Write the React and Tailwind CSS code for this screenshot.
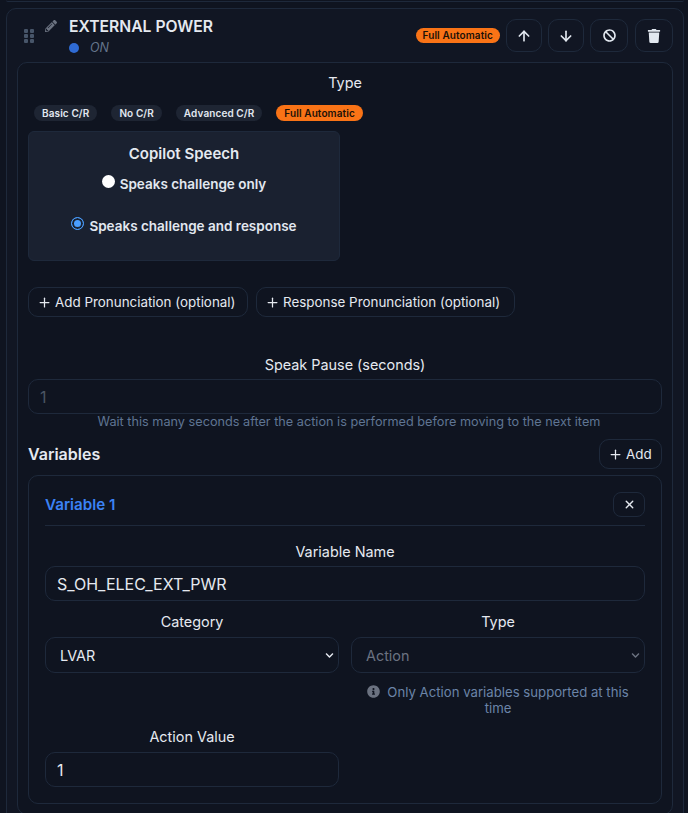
import { FaBan, FaTrash, FaInfoCircle, FaPencilAlt, FaChevronDown } from "react-icons/fa";
import { LuPlus, LuArrowUp, LuArrowDown, LuX } from "react-icons/lu";

const labelClass = "block text-center text-[14.4px] leading-[20px] font-normal text-[#e5e9f0]";
const borderClass = "border border-[#1e293b]";

function Pill({ name, active, className }) {
  return (
    <span
      className={
        "flex items-center rounded-full text-[10px] font-semibold tracking-[0.1px] " +
        (active ? "bg-[#f97316] text-[#1a1108] " : "bg-[#1e2533] text-[#e2e8f0] ") +
        (className || "h-[16px] px-[8px]")
      }
    >
      {name}
    </span>
  );
}

function IconButton({ width, children }) {
  return (
    <button className={`flex h-[33px] items-center justify-center rounded-[10px] text-[#e2e8f0] ${borderClass} ${width}`}>
      {children}
    </button>
  );
}

function OutlineButton({ name, className }) {
  return (
    <button className={`flex h-[30px] items-center gap-[3px] rounded-[10px] pl-[8px] text-[13.4px] text-[#e5e9f0] ${borderClass} ${className}`}>
      <LuPlus className="h-[15px] w-[15px]" />
      {name}
    </button>
  );
}

function Radio({ label, checked, className }) {
  return (
    <label className={`flex items-start justify-center gap-[5px] text-[13.5px] font-semibold leading-[20px] text-[#e2e8f0] ${className}`}>
      <input
        type="radio"
        name="speech"
        defaultChecked={checked}
        className="mt-[1px] h-[13px] w-[13px] appearance-none rounded-full bg-white checked:border checked:border-[#4a9eff] checked:bg-[#4a9eff] checked:shadow-[inset_0_0_0_2px_#1a2130]"
      />
      {label}
    </label>
  );
}

function Select({ value, disabled, name }) {
  return (
    <div className="relative mt-[5px]">
      <select
        disabled={disabled}
        defaultValue={value}
        name={name}
        className={`h-[36px] w-full appearance-none rounded-[10px] bg-[#0f1420] px-[14px] pt-[2px] text-[14.4px] ${borderClass} ${disabled ? "text-[#6b7280]" : "text-[#e5e9f0]"}`}
      >
        <option>{value}</option>
      </select>
      <FaChevronDown className={`absolute right-[5px] top-[14px] h-[9px] w-[9px] ${disabled ? "text-[#6b7280]" : "text-[#e5e9f0]"}`} />
    </div>
  );
}

export default function App() {
  return (
    <div className="h-[813px] overflow-hidden bg-[#0f1420] font-['Inter',sans-serif]">
      <div className="ml-[6px] mr-[4px] h-[2px] rounded-b-[10px] border-b border-[#1e293b]" />
      <div className={`ml-[6px] mr-[4px] mt-[6px] rounded-[10px] bg-[#111623] px-[10px] pb-[20px] ${borderClass}`}>
        <div className="flex h-[53px] items-start">
          <div className="ml-[7px] mt-[20px] grid w-[11px] grid-cols-2 gap-[1px]">
            {[0, 1, 2, 3, 4, 5].map((i) => (
              <span key={i} className="h-[4px] w-[4px] rounded-[1px] bg-[#475569]" />
            ))}
          </div>
          <FaPencilAlt className="ml-[10px] mt-[11px] h-[12px] w-[12px] text-[#6b7280]" />
          <div className="ml-[12px] mt-[8px]">
            <h2 className="text-[15.7px] font-semibold leading-[20px] text-[#e5e9f0]">EXTERNAL POWER</h2>
            <div className="mt-[3px] flex items-center gap-[11px] text-[12.5px] italic leading-[16px] text-[#64748b]">
              <span className="h-[10px] w-[10px] rounded-full bg-[#2f6bd4]" />
              ON
            </div>
          </div>
          <div className="ml-auto mt-[10px] flex items-center gap-[6px]">
            <Pill name="Full Automatic" active className="h-[15px] px-[7px]" />
            <IconButton width="w-[36px]"><LuArrowUp className="h-[16px] w-[16px]" strokeWidth={2.5} /></IconButton>
            <IconButton width="w-[36px]"><LuArrowDown className="h-[16px] w-[16px]" strokeWidth={2.5} /></IconButton>
            <IconButton width="w-[38px]"><FaBan className="h-[13px] w-[13px]" /></IconButton>
            <IconButton width="w-[38px] ml-[1px]"><FaTrash className="h-[14px] w-[14px]" /></IconButton>
          </div>
        </div>

        <div className={`rounded-[10px] bg-[#0f1420] px-[10px] pb-[10px] pt-[10px] ${borderClass}`}>
          <p className={labelClass}>Type</p>
          <div className="ml-[6px] mt-[12px] flex gap-[14px]">
            <Pill name="Basic C/R" />
            <Pill name="No C/R" />
            <Pill name="Advanced C/R" />
            <Pill name="Full Automatic" active />
          </div>

          <div className={`mt-[10px] h-[130px] w-[312px] rounded-[6px] bg-[#1a2130] pt-[12px] ${borderClass}`}>
            <h3 className="text-center text-[15px] font-semibold leading-[20px] text-[#e5e9f0]">Copilot Speech</h3>
            <Radio label="Speaks challenge only" className="mt-[10px]" />
            <Radio label="Speaks challenge and response" checked className="mt-[22px]" />
          </div>

          <div className="mt-[26px] flex gap-[8px]">
            <OutlineButton name="Add Pronunciation (optional)" className="w-[220px]" />
            <OutlineButton name="Response Pronunciation (optional)" className="w-[259px]" />
          </div>

          <p className={`${labelClass} mt-[38px]`}>Speak Pause (seconds)</p>
          <input
            readOnly
            value="1"
            className={`mt-[4px] block h-[35px] w-full rounded-[10px] bg-[#0f1420] px-[11px] text-[16px] text-[#4b5563] ${borderClass}`}
          />
          <p className="mt-[1px] pl-[8px] text-center text-[12.7px] leading-[14px] text-[#5f7593]">
            Wait this many seconds after the action is performed before moving to the next item
          </p>

          <div className="mt-[10px] flex h-[30px] items-center justify-between">
            <h3 className="text-[16px] font-semibold text-[#e5e9f0]">Variables</h3>
            <OutlineButton name="Add" className="w-[63px]" />
          </div>

          <div className={`mt-[6px] rounded-[10px] px-[16px] pb-[16px] pt-[16px] ${borderClass}`}>
            <div className="flex h-[34px] items-start justify-between border-b border-[#1e293b]">
              <h4 className="text-[15.2px] font-semibold leading-[26px] text-[#3b82f6]">Variable 1</h4>
              <button className={`flex h-[25px] w-[32px] items-center justify-center rounded-[8px] text-[#e5e9f0] ${borderClass}`}>
                <LuX className="h-[13px] w-[13px]" strokeWidth={2.5} />
              </button>
            </div>

            <p className={`${labelClass} mt-[16px]`}>Variable Name</p>
            <input
              readOnly
              value="S_OH_ELEC_EXT_PWR"
              className={`mt-[4px] block h-[35px] w-full rounded-[10px] bg-[#0f1420] px-[11px] text-[16px] text-[#e5e9f0] ${borderClass}`}
            />

            <div className="mt-[11px] grid grid-cols-2 gap-[12px]">
              <div>
                <p className={labelClass}>Category</p>
                <Select value="LVAR" name="category" />
              </div>
              <div>
                <p className={labelClass}>Type</p>
                <Select value="Action" name="type" disabled />
                <p className="mt-[11px] px-[10px] text-center text-[13.2px] leading-[16px] text-[#6b84a8]">
                  <FaInfoCircle className="mr-[7px] inline h-[13px] w-[13px] align-[-1px] text-[#6b7280]" />
                  Only Action variables supported at this time
                </p>
              </div>
            </div>

            <div className="mt-[11px] w-[294px]">
              <p className={labelClass}>Action Value</p>
              <input
                readOnly
                value="1"
                className={`mt-[5px] block h-[35px] w-full rounded-[10px] bg-[#0f1420] px-[11px] text-[16px] text-[#e5e9f0] ${borderClass}`}
              />
            </div>
          </div>
        </div>
      </div>
    </div>
  );
}
